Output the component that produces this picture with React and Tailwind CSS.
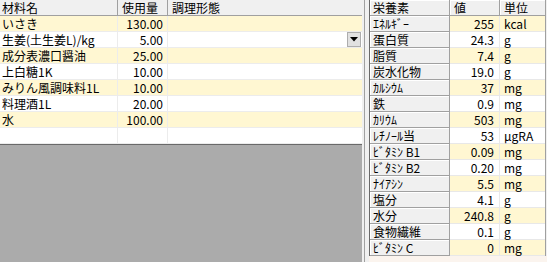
import React from 'react';

// 材料 grid rows (last row is the empty entry row)
const ingredients = [
  { name: 'いさき', qty: '130.00' },
  { name: '生姜(土生姜L)/kg', qty: '5.00', combo: true },
  { name: '成分表濃口醤油', qty: '25.00' },
  { name: '上白糖1K', qty: '10.00' },
  { name: 'みりん風調味料1L', qty: '10.00' },
  { name: '料理酒1L', qty: '20.00' },
  { name: '水', qty: '100.00' },
  { name: '', qty: '' },
];

const nutrients = [
  ['ｴﾈﾙｷﾞｰ', '255', 'kcal'],
  ['蛋白質', '24.3', 'g'],
  ['脂質', '7.4', 'g'],
  ['炭水化物', '19.0', 'g'],
  ['ｶﾙｼｳﾑ', '37', 'mg'],
  ['鉄', '0.9', 'mg'],
  ['ｶﾘｳﾑ', '503', 'mg'],
  ['ﾚﾁﾉｰﾙ当', '53', 'μgRA'],
  ['ﾋﾞﾀﾐﾝ B1', '0.09', 'mg'],
  ['ﾋﾞﾀﾐﾝ B2', '0.20', 'mg'],
  ['ﾅｲｱｼﾝ', '5.5', 'mg'],
  ['塩分', '4.1', 'g'],
  ['水分', '240.8', 'g'],
  ['食物繊維', '0.1', 'g'],
  ['ﾋﾞﾀﾐﾝ C', '0', 'mg'],
];

function ComboButton() {
  return (
    <div className="w-[14px] h-[15px] bg-[#e1e1e1] border border-[#adadad] flex items-center justify-center">
      <svg width="8" height="5" viewBox="0 0 8 5">
        <path d="M0 0h8L4 4.5z" fill="#000" />
      </svg>
    </div>
  );
}

function IngredientGrid() {
  return (
    <div className="bg-white border-b border-[#696969]">
      <div className="flex h-[16px] bg-[#f0f0f0] border-b border-[#a0a0a0]">
        <div className="w-[118px] pl-[2px] border-r border-[#a0a0a0]">材料名</div>
        <div className="w-[50px] pl-[4px] border-r border-[#a0a0a0]">使用量</div>
        <div className="flex-1 pl-[4px]">調理形態</div>
      </div>
      {ingredients.map((row, i) => (
        <div
          key={i}
          className={`flex h-[16px] border-b border-[#ececec] ${i % 2 === 0 && row.name ? 'bg-[#fff7d2]' : 'bg-white'}`}
        >
          <div className="w-[118px] pl-[2px] border-r border-[#ececec] whitespace-nowrap">{row.name}</div>
          <div className="w-[50px] pr-[4px] text-right border-r border-[#ececec]">{row.qty}</div>
          <div className="flex-1 flex justify-end pr-px">{row.combo && <ComboButton />}</div>
        </div>
      ))}
    </div>
  );
}

function NutrientGrid() {
  return (
    <div className="w-[177px] border-l border-[#696969] border-r border-r-[#a0a0a0]">
      <div className="flex h-[16px] bg-[#f0f0f0]">
        <div className="w-[80px] pl-[3px] border-r border-b border-[#a0a0a0] shadow-[inset_1px_1px_0_#fff]">栄養素</div>
        <div className="w-[50px] pl-[4px] border-r border-b border-[#a0a0a0] shadow-[inset_1px_1px_0_#fff]">値</div>
        <div className="flex-1 pl-[4px] border-b border-[#a0a0a0] shadow-[inset_1px_1px_0_#fff]">単位</div>
      </div>
      {nutrients.map(([label, value, unit], i) => {
        const bg = i % 2 === 0 ? 'bg-[#fff7d2]' : 'bg-white';
        return (
          <div key={label} className="flex h-[16px]">
            <div className="w-[80px] pl-[3px] bg-[#f0f0f0] border-r border-b border-[#a0a0a0] shadow-[inset_1px_1px_0_#fff] whitespace-nowrap">
              {label}
            </div>
            <div className={`w-[50px] pr-[5px] text-right border-r border-b border-[#e8e8e8] ${bg}`}>{value}</div>
            <div className={`flex-1 pl-[4px] border-b border-[#e8e8e8] ${bg}`}>{unit}</div>
          </div>
        );
      })}
    </div>
  );
}

export default function App() {
  return (
    <div className="w-[547px] h-[262px] flex overflow-hidden bg-[#f0f0f0] text-black text-[12px] leading-[15px] font-['Noto_Sans_CJK_JP',sans-serif]">
      <div className="w-[362px] flex flex-col bg-[#ababab]">
        <IngredientGrid />
      </div>
      <div className="w-[2px] bg-[#f0f0f0]" />
      <div className="w-px bg-[#a0a0a0]" />
      <div className="w-[4px] bg-[#f0f0f0]" />
      <div className="flex-1 flex flex-col">
        <NutrientGrid />
        <div className="flex-1 bg-[#fbf4ee]" />
      </div>
    </div>
  );
}
